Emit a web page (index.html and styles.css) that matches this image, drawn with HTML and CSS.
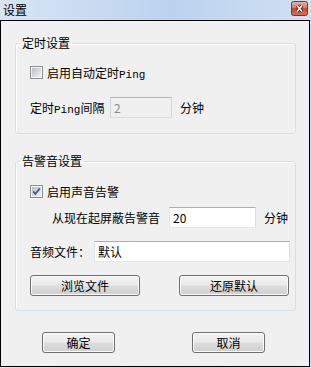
FILE: index.html
```html
<!DOCTYPE html>
<html lang="zh-CN">
<head>
    <meta charset="UTF-8">
    <title>设置</title>
    <link rel="stylesheet" href="styles.css">
</head>
<body>
<div class="window">
    <div class="titlebar">
        <span class="title">设置</span>
        <span class="close">
            <svg width="17" height="15" viewBox="0 0 17 15">
                <defs>
                    <linearGradient id="close-bg" x1="0" y1="0" x2="0" y2="1">
                        <stop offset="0" stop-color="#eab5a6"/>
                        <stop offset="0.45" stop-color="#d97a62"/>
                        <stop offset="0.5" stop-color="#c94b2f"/>
                        <stop offset="1" stop-color="#d4705a"/>
                    </linearGradient>
                </defs>
                <rect x="0.5" y="0.5" width="16" height="14" rx="2" fill="url(#close-bg)" stroke="#7d3526"/>
                <path d="M6 4.5 L11 10.5 M11 4.5 L6 10.5" stroke="#40201a" stroke-width="3.4"/>
                <path d="M6 4.5 L11 10.5 M11 4.5 L6 10.5" stroke="#ffffff" stroke-width="1.6"/>
            </svg>
        </span>
    </div>

    <div class="client">
        <!-- 定时设置 -->
        <fieldset class="group">
            <legend>定时设置</legend>
            <div class="group-body ping-body">
                <div class="row">
                    <span class="checkbox">
                        <svg width="13" height="13" viewBox="0 0 13 13">
                            <defs>
                                <linearGradient id="cb1" x1="0" y1="0" x2="1" y2="1">
                                    <stop offset="0" stop-color="#b9bec5"/>
                                    <stop offset="1" stop-color="#f2f2f3"/>
                                </linearGradient>
                            </defs>
                            <rect x="0.5" y="0.5" width="12" height="12" fill="#f4f4f4" stroke="#8e8f8f"/>
                            <rect x="2" y="2" width="9" height="9" fill="url(#cb1)"/>
                        </svg>
                    </span>
                    <span>启用自动定时<span class="lat">Ping</span></span>
                </div>
                <div class="row row-gap-lg">
                    <span class="label label-interval">定时<span class="lat">Ping</span>间隔</span>
                    <input class="edit edit-interval" value="2" disabled>
                    <span class="unit">分钟</span>
                </div>
            </div>
        </fieldset>

        <!-- 告警音设置 -->
        <fieldset class="group group-alarm">
            <legend>告警音设置</legend>
            <div class="group-body alarm-body">
                <div class="row">
                    <span class="checkbox">
                        <svg width="13" height="13" viewBox="0 0 13 13">
                            <defs>
                                <linearGradient id="cb2" x1="0" y1="0" x2="1" y2="1">
                                    <stop offset="0" stop-color="#b9bec5"/>
                                    <stop offset="1" stop-color="#f2f2f3"/>
                                </linearGradient>
                            </defs>
                            <rect x="0.5" y="0.5" width="12" height="12" fill="#f4f4f4" stroke="#8e8f8f"/>
                            <rect x="2" y="2" width="9" height="9" fill="url(#cb2)"/>
                            <path d="M3.2 6.4 L5.4 8.8 L9.8 3.4" fill="none" stroke="#4a5d94" stroke-width="1.9"/>
                        </svg>
                    </span>
                    <span>启用声音告警</span>
                </div>
                <div class="row row-gap-sm">
                    <span class="label label-mute">从现在起屏蔽告警音</span>
                    <input class="edit edit-mute" value="20">
                    <span class="unit">分钟</span>
                </div>
                <div class="row row-gap-md">
                    <span class="label label-file">音频文件：</span>
                    <input class="edit edit-file" value="默认">
                </div>
                <div class="row row-gap-md row-buttons">
                    <button class="btn btn-wide">浏览文件</button>
                    <button class="btn btn-wide">还原默认</button>
                </div>
            </div>
        </fieldset>

        <div class="actions">
            <button class="btn btn-dialog">确定</button>
            <button class="btn btn-dialog">取消</button>
        </div>
    </div>
</div>
</body>
</html>
```

FILE: styles.css
```css
body {
    margin: 0;
    font-family: "Noto Sans CJK SC", "DejaVu Sans", sans-serif;
    font-size: 12px;
    color: #000;
}
.window {
    width: 311px;
    height: 368px;
    background: linear-gradient(90deg, #d7e5f5, #bcd3ee 55%, #cfe0f3);
}
.titlebar {
    height: 20px;
    box-sizing: border-box;
    display: flex;
    justify-content: space-between;
    align-items: center;
    padding: 0 3px 0 3px;
}
.title {
    line-height: 14px;
    margin-top: -1px;
}
.close {
    display: flex;
    align-self: flex-start;
    margin-top: 1px;
}
.client {
    width: 310px;
    height: 347px;
    box-sizing: border-box;
    border: 1px solid #000;
    background: #f0f0f0;
    padding: 15px 13px 0 14px;
}
.group {
    margin: 0;
    padding: 0;
    border: 1px solid #d5dfe5;
    border-radius: 3px;
    box-shadow: inset 1px 1px 0 #fff;
}
.group legend {
    margin-left: 4px;
    padding: 0 2px;
    line-height: 14px;
}
.group-alarm {
    margin-top: 20px;
}
.group-body {
    padding-left: 14px;
}
.ping-body {
    padding-top: 12px;
    padding-bottom: 15px;
}
.alarm-body {
    padding-top: 13px;
    padding-bottom: 14px;
}
.row {
    display: flex;
    align-items: center;
    height: 20px;
}
.row-gap-lg {
    margin-top: 15px;
    height: 21px;
}
.row-gap-sm {
    margin-top: 6px;
    height: 21px;
}
.row-gap-md {
    margin-top: 13px;
    height: 21px;
}
.checkbox {
    display: flex;
    margin-right: 4px;
}
.lat {
    font-family: "Liberation Mono", monospace;
    font-size: 11px;
}
.label-interval {
    width: 80px;
}
.label-mute {
    margin-left: 22px;
    width: 117px;
}
.label-file {
    width: 64px;
}
.edit {
    height: 21px;
    box-sizing: border-box;
    padding: 0 3px;
    margin: 0;
    font: inherit;
    color: #000;
    background: #fff;
    border: 1px solid;
    border-color: #abadb3 #dbdfe6 #e3e9ef #e2e3ea;
    outline: none;
}
.edit:disabled {
    background: #f0f0f0;
    color: #8d8d8d;
    border-color: #b5b5b5 #d4d4d4 #dcdcdc #d4d4d4;
}
.edit-interval {
    width: 62px;
}
.edit-mute {
    width: 87px;
}
.edit-file {
    width: 196px;
}
.unit {
    margin-left: 8px;
}
.row-buttons {
    gap: 39px;
}
.btn {
    height: 21px;
    margin: 0;
    padding: 0;
    font: inherit;
    color: #000;
    border: 1px solid #707070;
    border-radius: 3px;
    background: linear-gradient(#f2f2f2 0%, #ebebeb 48%, #dddddd 52%, #cfcfcf 100%);
    box-shadow: inset 0 0 0 1px #fbfbfb;
}
.btn-wide {
    width: 110px;
}
.actions {
    display: flex;
    gap: 77px;
    margin: 21px 0 0 27px;
}
.btn-dialog {
    width: 73px;
}
```
